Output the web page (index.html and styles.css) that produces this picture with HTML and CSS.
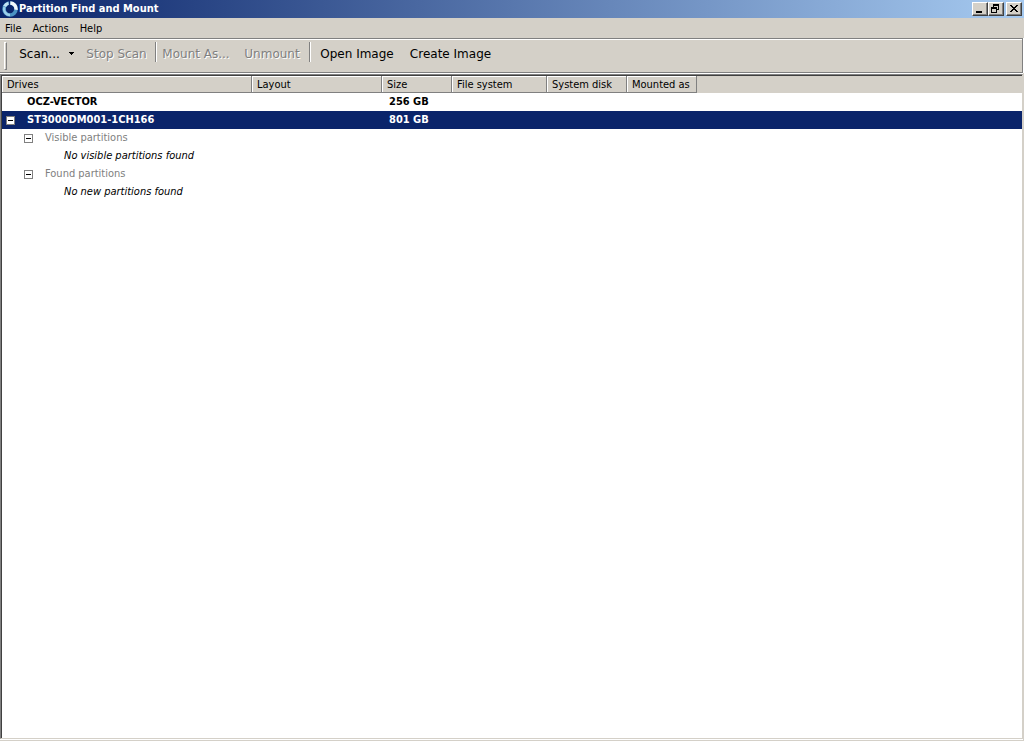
FILE: index.html
```
<!DOCTYPE html>
<html lang="en">
<head>
    <meta charset="UTF-8">
    <meta name="viewport" content="width=device-width, initial-scale=1.0">
    <title>Partition Find and Mount</title>
    <link rel="stylesheet" href="styles.css">
</head>
<body>

<header class="titlebar">
    <svg class="app-icon" width="16" height="16" viewBox="0 0 16 16" aria-hidden="true">
        <circle cx="8" cy="8" r="6" fill="none" stroke="#4a93c4" stroke-width="3.6"/>
        <path d="M8 14A6 6 0 0 1 2.4 6" fill="none" stroke="#9ccfea" stroke-width="2.4"/>
        <path d="M2.6 5.4A6 6 0 0 1 6.6 2.2" fill="none" stroke="#c4e2f2" stroke-width="3.2"/>
        <path d="M8.4 2A6 6 0 0 1 14 8.8" fill="none" stroke="#f4f8fa" stroke-width="3.4"/>
        <path d="M7.4 0v4.4" stroke="#0a246a" stroke-width="1"/>
    </svg>
    <h1>Partition Find and Mount</h1>
    <div class="window-buttons">
        <button type="button" aria-label="Minimize">
            <svg width="12" height="10" viewBox="0 0 12 10" shape-rendering="crispEdges"><path d="M2 7h6v2H2z"/></svg>
        </button>
        <button type="button" aria-label="Restore">
            <svg width="12" height="10" viewBox="0 0 12 10" shape-rendering="crispEdges"><path d="M3 0h6v6H7V5h1V2H4v1H3zM1 3h6v6H1zM2 5v3h4V5z" fill-rule="evenodd"/></svg>
        </button>
        <button type="button" class="close" aria-label="Close">
            <svg width="12" height="10" viewBox="0 0 12 10" shape-rendering="crispEdges"><path d="M2 1h2v1h1v1h2V2h1V1h2v1H9v1H8v1H7v1h1v1h1v1h1v1H8V7H7V6H5v1H4v1H2V7h1V6h1V5h1V4H4V3H3V2H2z"/></svg>
        </button>
    </div>
</header>

<nav class="menubar">
    <button type="button">File</button>
    <button type="button">Actions</button>
    <button type="button">Help</button>
</nav>

<div class="toolbar" role="toolbar" aria-label="Tools">
    <span class="grip"></span>
    <button type="button" class="scan">Scan...</button>
    <button type="button" class="drop" aria-label="Scan options">
        <svg width="5" height="3" viewBox="0 0 5 3" shape-rendering="crispEdges"><path d="M0 0h5v1H4v1H3v1H2V2H1V1H0z"/></svg>
    </button>
    <button type="button" class="stop" disabled>Stop Scan</button>
    <span class="separator"></span>
    <button type="button" class="mount" disabled>Mount As...</button>
    <button type="button" class="unmount" disabled>Unmount</button>
    <span class="separator"></span>
    <button type="button" class="open">Open Image</button>
    <button type="button" class="create">Create Image</button>
</div>

<main class="list">
    <table>
        <colgroup>
            <col class="col-drives">
            <col class="col-layout">
            <col class="col-size">
            <col class="col-fs">
            <col class="col-system">
            <col class="col-mounted">
            <col>
        </colgroup>
        <thead>
            <tr>
                <th>Drives</th>
                <th>Layout</th>
                <th>Size</th>
                <th>File system</th>
                <th>System disk</th>
                <th>Mounted as</th>
                <td class="rest"></td>
            </tr>
        </thead>
        <tbody>
            <tr class="drive">
                <td><div class="node"><span class="blank"></span>OCZ-VECTOR</div></td>
                <td></td>
                <td class="size">256 GB</td>
                <td colspan="4"></td>
            </tr>
            <tr class="drive selected">
                <td><div class="node"><button type="button" class="toggle" aria-label="Collapse"></button>ST3000DM001-1CH166</div></td>
                <td></td>
                <td class="size">801 GB</td>
                <td colspan="4"></td>
            </tr>
            <tr class="group">
                <td colspan="7"><div class="node level-1"><button type="button" class="toggle" aria-label="Collapse"></button>Visible partitions</div></td>
            </tr>
            <tr class="note">
                <td colspan="7"><div class="node level-2"><span class="blank"></span>No visible partitions found</div></td>
            </tr>
            <tr class="group">
                <td colspan="7"><div class="node level-1"><button type="button" class="toggle" aria-label="Collapse"></button>Found partitions</div></td>
            </tr>
            <tr class="note">
                <td colspan="7"><div class="node level-2"><span class="blank"></span>No new partitions found</div></td>
            </tr>
        </tbody>
    </table>
</main>

</body>
</html>
```

FILE: styles.css
```
* {
    box-sizing: border-box;
}
body {
    margin: 0;
    height: 100vh;
    display: flex;
    flex-direction: column;
    background: #d4d0c8;
    color: #000;
    font-family: Tahoma, "DejaVu Sans Condensed", "DejaVu Sans", sans-serif;
    font-size: 11px;
    line-height: 16px;
}
button {
    margin: 0;
    padding: 0;
    border: none;
    background: none;
    color: inherit;
    font: inherit;
    white-space: nowrap;
}
svg {
    display: block;
}

/* title bar */
.titlebar {
    display: flex;
    align-items: center;
    height: 18px;
    padding: 0 2px;
    background: linear-gradient(90deg, #0a246a, #a6caf0);
    color: #fff;
}
.titlebar h1 {
    flex: 1;
    margin: 0 0 0 1px;
    font-size: 11px;
    font-weight: bold;
    line-height: 16px;
}
.window-buttons {
    display: flex;
}
.window-buttons button {
    width: 16px;
    height: 14px;
    padding: 0 1px;
    border: 1px solid;
    border-color: #fff #404040 #404040 #fff;
    background: #d4d0c8;
    box-shadow: inset -1px -1px #808080;
    color: #000;
}
.window-buttons .close {
    margin-left: 2px;
}

/* menu */
.menubar {
    display: flex;
    gap: 11px;
    height: 20px;
    padding: 1px 5px 0;
}

/* toolbar */
.toolbar {
    display: flex;
    align-items: flex-start;
    height: 35px;
    margin-right: 1px;
    padding: 3px 4px;
    border: 1px solid #808080;
    border-left: none;
    box-shadow: inset 0 1px #fff, 0 1px #fff, 1px 0 #fff;
    font-family: Verdana, "DejaVu Sans", sans-serif;
    font-size: 12px;
}
.toolbar button {
    height: 23px;
}
.toolbar button:disabled {
    color: #808080;
    text-shadow: 1px 1px #fff;
}
.grip {
    width: 3px;
    height: 28px;
    border: 1px solid;
    border-color: #fff #808080 #808080 #fff;
}
.separator {
    width: 2px;
    height: 20px;
    border-left: 1px solid #808080;
    border-right: 1px solid #fff;
}
.toolbar .scan {
    width: 62px;
    padding-left: 3px;
}
.toolbar .drop {
    width: 9px;
}
.toolbar .stop {
    width: 77px;
}
.toolbar .mount {
    width: 78px;
}
.toolbar .unmount {
    width: 74px;
}
.toolbar .open {
    width: 92px;
}
.toolbar .create {
    width: 95px;
}

/* drive list */
.list {
    flex: 1;
    margin: 1px 1px 2px 0;
    border: 1px solid;
    border-color: #808080 #d4d0c8 #d4d0c8 #808080;
    background: #fff;
    box-shadow: inset 1px 1px #404040, 0 1px #fff;
    padding: 1px 0 0 1px;
}
table {
    width: 100%;
    table-layout: fixed;
    border-collapse: separate;
    border-spacing: 0;
}
.col-drives {
    width: 250px;
}
.col-layout {
    width: 130px;
}
.col-size,
.col-mounted {
    width: 70px;
}
.col-fs {
    width: 95px;
}
.col-system {
    width: 80px;
}
th,
td {
    padding: 0;
    height: 18px;
    line-height: 18px;
    text-align: left;
    white-space: nowrap;
}
th {
    height: 17px;
    padding: 1px 5px 0;
    border-right: 1px solid #808080;
    border-bottom: 1px solid #808080;
    background: #d4d0c8;
    box-shadow: inset 1px 1px #fff;
    font-weight: normal;
    line-height: 15px;
}
.rest {
    height: 17px;
    line-height: 16px;
    background: #d4d0c8;
}
.drive {
    font-weight: bold;
}
.selected {
    background: #0a246a;
    color: #fff;
}
.size {
    padding-left: 7px;
}
.node {
    display: flex;
    align-items: center;
    gap: 12px;
    padding-left: 4px;
}
.level-1 {
    padding-left: 22px;
}
.level-2 {
    padding-left: 41px;
}
.blank {
    width: 9px;
}
.toggle {
    width: 9px;
    height: 9px;
    border: 1px solid #808080;
    background: linear-gradient(#000, #000) center / 5px 1px no-repeat #fff;
}
.group {
    color: #808080;
}
.note {
    font-style: italic;
}
```
